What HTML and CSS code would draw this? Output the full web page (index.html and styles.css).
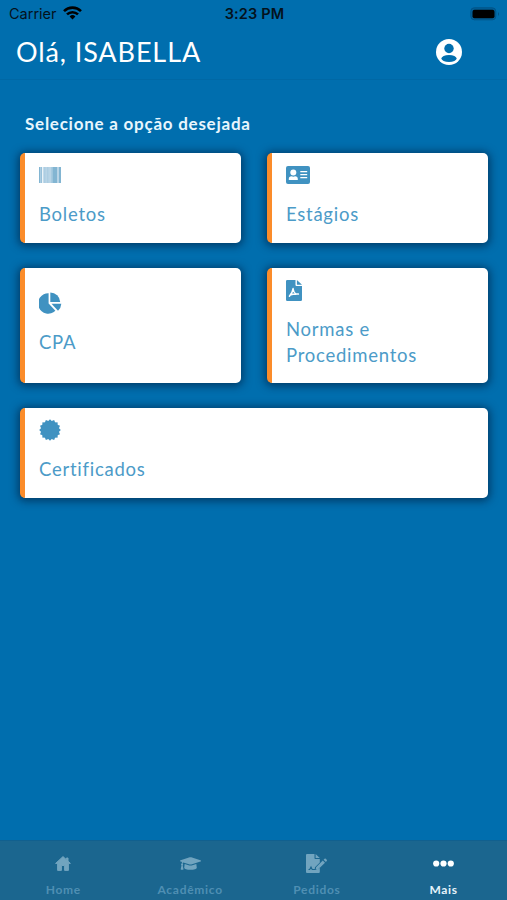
FILE: index.html
```html
<!DOCTYPE html>
<html lang="pt-BR">
<head>
<meta charset="utf-8">
<title>Mais</title>
<link rel="stylesheet" href="styles.css">
</head>
<body>
<div class="status">
  <div class="carrier"><span>Carrier</span>
    <svg width="19" height="14" viewBox="0 0 19 14"><g fill="none" stroke="#000" stroke-width="2.6"><path d="M1 5.1a12.2 12.2 0 0 1 17 0"/><path d="M4 8.4a8 8 0 0 1 11 0"/></g><path d="M9.500 13.600l-2.900-3.100a4.200 4.200 0 0 1 5.800 0z"/></svg>
  </div>
  <div class="time">3:23 PM</div>
  <svg class="battery" width="30" height="14" viewBox="0 0 30 14"><rect x=".8" y=".8" width="25" height="12" rx="3.500" fill="#005f98" stroke="#005488"/><rect x="2.500" y="2.700" width="22" height="8.500" rx="2"/><path d="M28 5q2 2 0 4z" fill="#005488"/></svg>
</div>
<header class="header">
  <h1>Olá, ISABELLA</h1>
  <svg width="26" height="26" viewBox="0 0 26 26"><circle cx="13" cy="13" r="13" fill="#fff"/><circle cx="13" cy="9.500" r="4.700" fill="#006eae"/><ellipse cx="13" cy="19.500" rx="7.600" ry="3.500" fill="#006eae"/></svg>
</header>
<main class="main">
  <h2>Selecione a opção desejada</h2>
  <div class="grid">
    <a class="card"><div class="icon">
      <svg width="22" height="16" viewBox="0 0 22 16"><path fill="#b8d4e6" d="M0 0h22v16H0z"/><path fill="#82b5d2" d="M0 0h1v16H0zM1.800 0h.8v16h-.8zM13.500 0h4.500v16h-4.500zM20 0h2v16h-2z"/><path fill="#eaf3f8" d="M3 0h1.200v16H3z"/><path fill="#9fc6dd" d="M5.500 0h.7v16h-.7zM8.500 0h.7v16h-.7zM12 0h.7v16H12z"/></svg>
    </div><span>Boletos</span></a>
    <a class="card"><div class="icon">
      <svg width="24" height="18" viewBox="0 0 24 18"><rect width="24" height="18" rx="2" fill="#4092c1"/><g fill="#fff"><circle cx="7.300" cy="6.500" r="3"/><path d="M2.800 14v-1.200q0-2.500 2.700-2.500 1.800.8 3.600 0 2.700 0 2.700 2.500V14zM14.300 5h6.900v1.200h-6.900zM14.300 8h6.900v1.200h-6.900zM14.300 11h6.900v1.200h-6.900z"/></g></svg>
    </div><span>Estágios</span></a>
    <a class="card"><div class="icon">
      <svg width="23" height="22" viewBox="0 0 23 22"><g fill="#4092c1"><path d="M9.600 1.300v10.200l6.800 7.300A10.200 10.200 0 1 1 9.600 1.300z"/><path d="M11.300.4a10 10 0 0 1 9.900 9.600h-9.900z"/><path d="M12.500 11.700h9.800a10.300 10.300 0 0 1-3.300 7z"/></g></svg>
    </div><span>CPA</span></a>
    <a class="card"><div class="icon">
      <svg width="16" height="21" viewBox="0 0 16 21"><path fill="#4092c1" d="M1.200 0H9.500v5q0 1 1 1H16v13.700q0 1.300-1.300 1.300H1.300Q0 21 0 19.700V1.200Q0 0 1.200 0zM10.900 0l5.100 4.700h-5.100z"/><path fill="none" stroke="#fff" stroke-width="1.500" stroke-linecap="round" stroke-linejoin="round" d="M7.100 8.600q-.3 3.300-3.700 7.600M7.100 9q.5 3.700 3 5.200M4.800 14.800q2.800-1.100 7.600-.7"/></svg>
    </div><span>Normas e Procedimentos</span></a>
    <a class="card wide"><div class="icon">
      <svg width="22" height="22" viewBox="-11 -11 22 22" fill="#4092c1"><path id="sq" d="M0-10.800L10.800 0 0 10.800-10.800 0z"/><use href="#sq" transform="rotate(22.500)"/><use href="#sq" transform="rotate(45)"/><use href="#sq" transform="rotate(67.500)"/></svg>
    </div><span>Certificados</span></a>
  </div>
</main>
<nav class="tabs">
  <a class="tab"><div class="tabicon"><svg width="16" height="15" viewBox="0 0 16 15"><path fill="#71a4bf" stroke="#71a4bf" stroke-linejoin="round" d="M8 .6L.6 7.400h2v7h3.800V9.500h3.200v4.900h3.800v-7h2L13 5.200V2h-1.600v1.700z"/></svg></div><span>Home</span></a>
  <a class="tab"><div class="tabicon"><svg width="21" height="17" viewBox="0 0 640 512"><path fill="#71a4bf" d="M622.340 153.200L343.400 67.500c-15.200-4.670-31.600-4.670-46.790 0L17.660 153.200c-23.540 7.230-23.540 38.360 0 45.590l48.630 14.940c-10.670 13.190-17.230 29.280-17.880 46.900C38.780 266.150 32 276.110 32 288c0 10.780 5.680 19.850 13.860 25.650L20.330 428.530C18.110 438.520 25.710 448 35.940 448h56.110c10.240 0 17.840-9.480 15.620-19.470L82.140 313.650C90.320 307.850 96 298.780 96 288c0-11.570-6.470-21.250-15.660-26.870.76-15.020 8.440-28.300 20.690-36.720L296.600 284.500c9.060 2.780 26.440 6.250 46.790 0l278.950-85.700c23.550-7.240 23.550-38.360 0-45.600zM352.790 315.090c-28.530 8.760-52.840 3.920-65.590 0l-145.020-44.550L128 384c0 35.350 85.960 64 192 64s192-28.650 192-64l-14.180-113.470-145.030 44.560z"/></svg></div><span>Acadêmico</span></a>
  <a class="tab"><div class="tabicon"><svg width="21" height="19" viewBox="0 0 21 19"><path fill="#71a4bf" d="M1 0h7.500v4.200q0 .8.800.8h4.500v3.500L9 13.200l-.4 2.800 3-.2 2.200-2.200V18q0 1-1 1H1q-1 0-1-1V1q0-1 1-1zM9.600 0l4.200 4H9.600zM17.600 5.700l2.300 2.200.8-.9q.6-.7 0-1.300l-.9-.9q-.7-.6-1.300 0zM16.800 6.500l-6.700 6.700-.4 2.400 2.600-.3 6.700-6.600z"/><path d="M2.500 15.500h1.200l1.300-2.600 1.200 2.600h3" fill="none" stroke="#1b668f" stroke-width="1.100"/></svg></div><span>Pedidos</span></a>
  <a class="tab active"><div class="tabicon"><svg width="21" height="7" viewBox="0 0 21 7" fill="#fff"><circle cx="3.200" cy="3.500" r="3.100"/><circle cx="10.500" cy="3.500" r="3.100"/><circle cx="17.800" cy="3.500" r="3.100"/></svg></div><span>Mais</span></a>
</nav>
</body>
</html>
```
FILE: styles.css
```css
* { box-sizing: border-box; }
body {
  margin: 0;
  height: 900px;
  display: flex;
  flex-direction: column;
  background: #006eae;
  font-family: Lato, sans-serif;
  overflow: hidden;
}
svg { display: block; }
.status {
  height: 27px;
  padding: 0 7px 0 9px;
  display: grid;
  grid-template-columns: 1fr auto 1fr;
  align-items: center;
  font: 14.500px/27px Inter, sans-serif;
  color: #04121c;
}
.carrier { display: flex; align-items: center; gap: 6px; }
.carrier svg { margin-top: -2px; }
.time { font-weight: 600; letter-spacing: .15px; }
.battery { justify-self: end; }
.header {
  height: 53px;
  padding: 0 45px 3px 16px;
  display: flex;
  align-items: center;
  justify-content: space-between;
  border-bottom: 1px solid #0068a5;
}
h1 {
  margin: 0;
  font-size: 27px;
  line-height: 36px;
  font-weight: 400;
  letter-spacing: .9px;
  color: #fff;
}
.main { flex: 1; padding: 31px 19px 0 20px; }
h2 {
  margin: 0 0 17px 5px;
  font-size: 17px;
  line-height: 25px;
  font-weight: 700;
  letter-spacing: .75px;
  color: #e8f6fd;
}
.grid {
  display: grid;
  grid-template-columns: 1fr 1fr;
  gap: 25px 26px;
}
.card {
  min-height: 90px;
  padding: 10px 14px 15px;
  border-left: 5px solid #fb8c2a;
  border-radius: 5px;
  background: #fff;
  box-shadow: 0 1px 8px 2px rgba(0, 25, 55, .6);
  display: flex;
  flex-direction: column;
  justify-content: center;
  font-size: 18.500px;
  line-height: 25.500px;
  letter-spacing: .75px;
  color: #4c9bc8;
}
.wide { grid-column: 1 / -1; }
.icon { height: 24px; margin-bottom: 15px; display: flex; align-items: center; }
.tabs {
  height: 60px;
  border-top: 1px solid #11608f;
  background: #1b668f;
  display: grid;
  grid-template-columns: repeat(4, 1fr);
}
.tab {
  display: flex;
  flex-direction: column;
  align-items: center;
  font-size: 12px;
  line-height: 16px;
  font-weight: 700;
  letter-spacing: .7px;
  color: #4f8fb3;
}
.tabicon { height: 20px; margin: 12px 0 9px; display: flex; align-items: center; }
.active { color: #e6f3fa; }
```
